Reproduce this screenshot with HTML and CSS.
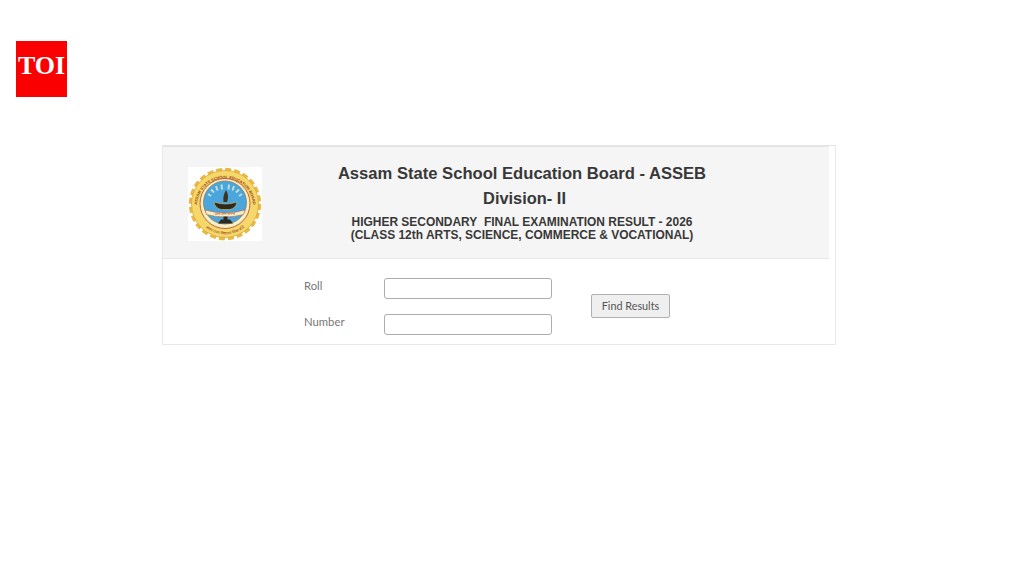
FILE: index.html
```html
<!DOCTYPE html>
<html lang="en">
<head>
<meta charset="utf-8">
<title>ASSEB Result</title>
<link rel="stylesheet" href="styles.css">
</head>
<body>
<div class="logo-wrap"><div class="toi">TOI</div></div>
<main class="card">
  <header class="head">
    <div class="seal">
      <svg width="74" height="74" viewBox="0 0 74 74">
        <defs>
          <path id="arc-top" d="M12 52a28 28 0 1 1 50 0"/>
          <path id="arc-bottom" d="M6.500 37a30.500 30.500 0 0 0 61 0"/>
        </defs>
        <rect width="74" height="74" fill="#fff"/>
        <circle cx="37" cy="37" r="34.500" fill="none" stroke="#e8b945" stroke-width="3.400" stroke-dasharray="6 3.030"/>
        <circle cx="37" cy="37" r="33.500" fill="#f5d869" stroke="#d9a63a" stroke-width=".8"/>
        <circle cx="37" cy="36.500" r="25" fill="#f6efc6" stroke="#c0613a" stroke-width="1"/>
        <text class="seal-top"><textPath href="#arc-top" startOffset="50%" text-anchor="middle">ASSAM STATE SCHOOL EDUCATION BOARD</textPath></text>
        <text class="seal-bottom"><textPath href="#arc-bottom" startOffset="50%" text-anchor="middle">असम राज्य विद्यालय शिक्षा बोर्ड</textPath></text>
        <circle cx="37" cy="35.500" r="21.500" fill="#4ba6de" stroke="#8a7a55" stroke-width=".8"/>
        <path d="M20 27l3 2M23 22.500l3 3M28 19l1.500 4.500M33.500 17.500l.5 5M41 17.500l-.5 5M46 19l-1.500 4.500M51 22.500l-3 3M54 27l-3 2" stroke="#dcecd8" stroke-width="2" opacity=".8"/>
        <path d="M38 23q3.500 6 1 12h-3.500q-1-6 2.500-12z" fill="#3d3520"/>
        <path d="M26 35q11.500 4 23 0q-1 6.500-7.500 7.500h-8q-6.500-1-7.500-7.500z" fill="#2f2a1c" stroke="#d8bd62" stroke-width=".6"/>
        <path d="M17 43q20 6 40 0l-1.500 4.500q-18.500 5-37 0z" fill="#f6efc6" stroke="#c0613a" stroke-width=".6"/>
        <text class="seal-band" x="37" y="48.300">सत्यं ज्ञानं अनन्तं</text>
        <path d="M35.500 49.500h4v3h2.500l3 4h-15l3-4h2.500z" fill="#2f2a1c"/>
      </svg>
    </div>
    <div class="titles">
      <h1 class="t1">Assam State School Education Board - ASSEB</h1>
      <h2 class="t2">Division- II</h2>
      <p class="t3">HIGHER SECONDARY&nbsp; FINAL EXAMINATION RESULT - 2026<br>(CLASS 12th ARTS, SCIENCE, COMMERCE &amp; VOCATIONAL)</p>
    </div>
  </header>
  <form class="form">
    <div class="fields">
      <label class="row"><span class="lbl">Roll</span><input class="inp" type="text"></label>
      <label class="row"><span class="lbl">Number</span><input class="inp" type="text"></label>
    </div>
    <button class="btn" type="button">Find Results</button>
  </form>
</main>
</body>
</html>
```
FILE: styles.css
```css
* { box-sizing: border-box; }
html, body { margin: 0; height: 100%; background: #fff; overflow: hidden; }
body { font-family: "Liberation Sans", Arial, sans-serif; }
.logo-wrap { padding: 41px 0 0 16px; height: 145px; }
.toi {
  width: 51px; height: 56px; background: #fb0000; color: #fff;
  font: bold 26px/50px "Liberation Serif", serif; text-align: center;
}
.card {
  width: 674px; height: 200px; margin-left: 162px;
  border: 1px solid #e8e8e8; border-top-color: #e4e4e4;
  padding-right: 6px;
}
.head {
  height: 113px; background: #f5f5f5; border-bottom: 1px solid #e8e8e8;
  border-top: 1px solid #e4e4e4;
  display: flex;
}
.seal { padding: 20px 0 0 25px; width: 100px; flex: none; }
.seal svg { display: block; }
.seal-top { font: bold 3.900px "Liberation Sans", sans-serif; fill: #9a3d22; }
.seal-bottom { font: 3.800px "Noto Sans", "Liberation Sans", sans-serif; fill: #9a3d22; }
.seal-band { font: 3.500px "Noto Sans", "Liberation Sans", sans-serif; fill: #b5432a; text-anchor: middle; }
.titles { width: 518px; text-align: center; color: #383838; }
.t1 { margin: 16px 0 0; font-size: 16.600px; line-height: 21px; font-weight: bold; }
.t2 { margin: 4px 0 0; padding-left: 5px; font-size: 16.400px; line-height: 20px; font-weight: bold; }
.t3 { margin: 8px 0 0; font-size: 11.960px; line-height: 13px; font-weight: bold; }
.form { display: flex; height: 85px; align-items: flex-start; }
.fields { display: flex; flex-direction: column; gap: 15px; padding: 19px 0 0 141px; }
.row { display: flex; align-items: flex-start; }
.lbl { width: 80px; font: 11.300px/14px Lato, sans-serif; color: #777; padding-top: 1px; }
.inp {
  width: 168px; height: 21px; padding: 0; background: #fff;
  border: 1px solid #adadad; border-radius: 3px; outline: none; display: block;
}
.btn {
  margin: 35px 0 0 39px; width: 79px; height: 24px; padding: 0 0 2px;
  background: #efefef; border: 1px solid #b0b0b0; border-radius: 2px;
  font: 10.800px Lato, sans-serif; color: #555;
}
```
